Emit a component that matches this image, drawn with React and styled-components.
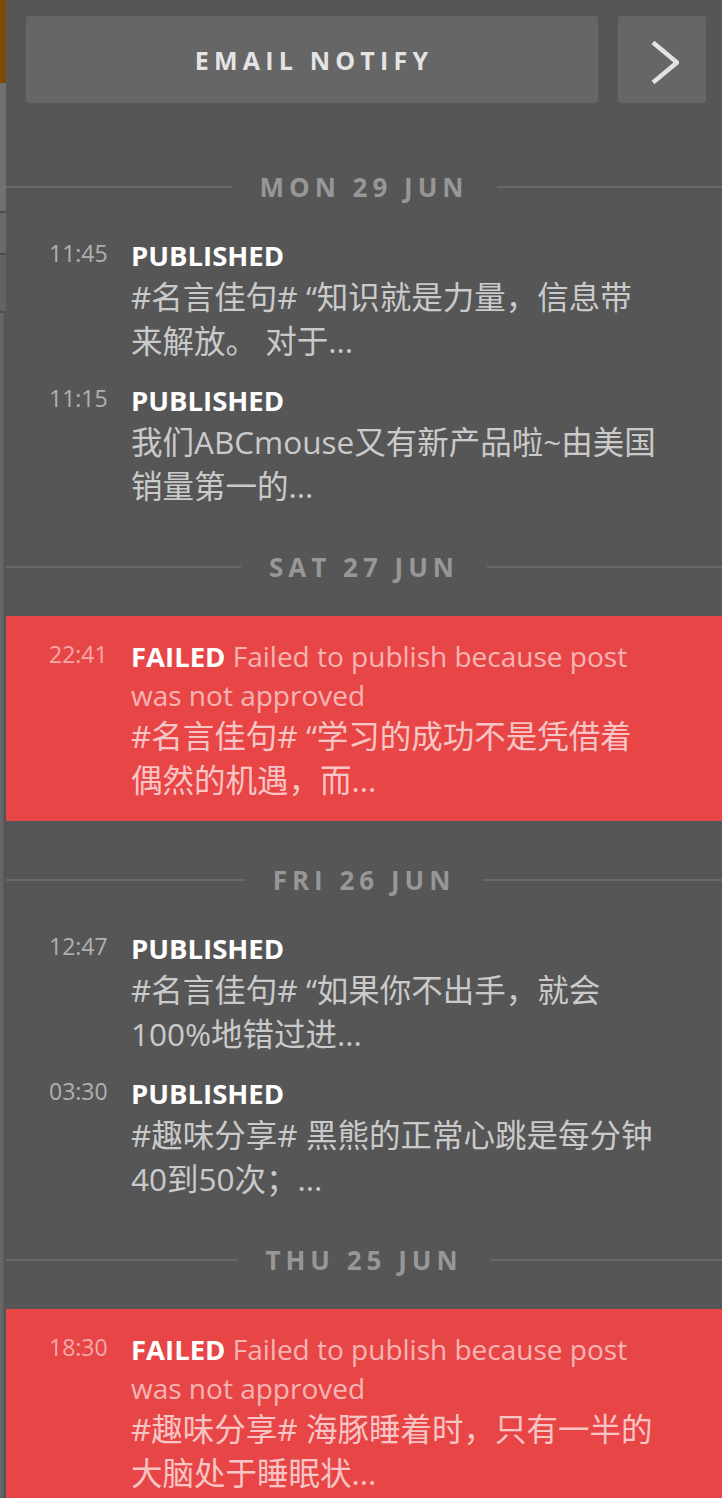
import React from "react";
import styled, { createGlobalStyle } from "styled-components";

const GlobalStyle = createGlobalStyle`
  html, body {
    margin: 0;
    padding: 0;
    background: #555555;
    overflow: hidden;
  }
  body {
    font-family: "Open Sans", "Noto Sans CJK SC", sans-serif;
  }
`;

const Page = styled.div`
  display: flex;
  flex-direction: row;
  width: 722px;
  height: 1498px;
  overflow: hidden;
  background: #555555;
`;

const LeftEdge = styled.div`
  display: flex;
  flex-direction: column;
  width: 6px;
  flex-shrink: 0;
  background: linear-gradient(to right, #6a6a6a, #5e5e5e);
  box-shadow: inset -2px 0 3px rgba(0, 0, 0, 0.15);
`;

const EdgeBlock = styled.div`
  height: ${(p) => p.h}px;
  background: ${(p) => p.color};
  border-bottom: ${(p) => (p.line ? "2px solid #4f4f4f" : "none")};
`;

const Panel = styled.div`
  flex: 1;
  display: flex;
  flex-direction: column;
  padding-top: 16px;
  background: #565656;
`;

const Toolbar = styled.div`
  display: flex;
  flex-direction: row;
  gap: 20px;
  padding: 0 16px 0 20px;
  margin-bottom: 48px;
`;

const NotifyButton = styled.button`
  flex: 1;
  height: 87px;
  border: none;
  border-radius: 3px;
  background: #666666;
  color: #e4e4e4;
  font-family: "Open Sans", sans-serif;
  font-size: 25px;
  font-weight: 700;
  letter-spacing: 5.2px;
  padding: 0 0 0 4px;
`;

const ArrowButton = styled.button`
  width: 88px;
  height: 87px;
  border: none;
  border-radius: 3px;
  background: #666666;
  display: flex;
  align-items: center;
  justify-content: center;
  padding: 0;
`;

const Day = styled.section`
  display: flex;
  flex-direction: column;
  padding: 21px 0 23px;
`;

const Divider = styled.div`
  display: flex;
  flex-direction: row;
  align-items: center;
  height: 30px;
  margin-bottom: 34px;

  &::before,
  &::after {
    content: "";
    flex: 1;
    height: 2px;
    background: #696969;
  }
`;

const DayLabel = styled.span`
  margin: 0 28px;
  color: #979797;
  font-size: 26px;
  font-weight: 700;
  letter-spacing: 5px;
  line-height: 30px;
`;

const EntryList = styled.div`
  display: flex;
  flex-direction: column;
  gap: 18px;
`;

const Entry = styled.div`
  display: flex;
  flex-direction: row;
  padding: ${(p) => (p.failed ? "21px 0 19px 43px" : "0 0 0 43px")};
  background: ${(p) => (p.failed ? "#e84646" : "transparent")};
`;

const Time = styled.div`
  width: 82px;
  flex-shrink: 0;
  padding-top: 3px;
  font-size: 23px;
  line-height: 28px;
  color: rgba(255, 255, 255, 0.55);
`;

const Content = styled.div`
  width: 528px;
`;

const Headline = styled.div`
  font-size: 28px;
  line-height: 38px;
  color: rgba(255, 255, 255, 0.62);
`;

const Status = styled.span`
  font-size: 27.5px;
  font-weight: 700;
  color: #ffffff;
`;

const Body = styled.div`
  font-size: 31.5px;
  line-height: 44px;
  color: rgba(255, 255, 255, 0.7);
`;

const Chevron = () => (
  <svg width="34" height="48" viewBox="0 0 34 48">
    <polyline
      points="8,6.5 32,26.5 8,46.5"
      fill="none"
      stroke="#e2e2e2"
      strokeWidth="4.5"
    />
  </svg>
);

const days = [
  {
    label: "MON 29 JUN",
    entries: [
      {
        time: "11:45",
        status: "PUBLISHED",
        text: "#名言佳句# “知识就是力量，信息带来解放。 对于...",
      },
      {
        time: "11:15",
        status: "PUBLISHED",
        text: "我们ABCmouse又有新产品啦~由美国销量第一的...",
      },
    ],
  },
  {
    label: "SAT 27 JUN",
    entries: [
      {
        time: "22:41",
        status: "FAILED",
        message: "Failed to publish because post was not approved",
        text: "#名言佳句# “学习的成功不是凭借着偶然的机遇，而...",
      },
    ],
  },
  {
    label: "FRI 26 JUN",
    entries: [
      {
        time: "12:47",
        status: "PUBLISHED",
        text: "#名言佳句# “如果你不出手，就会100%地错过进...",
      },
      {
        time: "03:30",
        status: "PUBLISHED",
        text: "#趣味分享# 黑熊的正常心跳是每分钟40到50次；...",
      },
    ],
  },
  {
    label: "THU 25 JUN",
    entries: [
      {
        time: "18:30",
        status: "FAILED",
        message: "Failed to publish because post was not approved",
        text: "#趣味分享# 海豚睡着时，只有一半的大脑处于睡眠状...",
      },
    ],
  },
];

function App() {
  return (
    <Page>
      <GlobalStyle />
      <LeftEdge>
        <EdgeBlock h={83} color="#7a4b03" />
        <EdgeBlock h={128} color="#707070" line />
        <EdgeBlock h={40} color="#6a6a6a" line />
        <EdgeBlock h={56} color="#626262" line />
      </LeftEdge>
      <Panel>
        <Toolbar>
          <NotifyButton>EMAIL NOTIFY</NotifyButton>
          <ArrowButton>
            <Chevron />
          </ArrowButton>
        </Toolbar>
        {days.map((day) => (
          <Day key={day.label}>
            <Divider>
              <DayLabel>{day.label}</DayLabel>
            </Divider>
            <EntryList>
              {day.entries.map((entry, index) => (
                <Entry key={index} failed={entry.status === "FAILED"}>
                  <Time>{entry.time}</Time>
                  <Content>
                    <Headline>
                      <Status>{entry.status}</Status>
                      {entry.message ? " " + entry.message : ""}
                    </Headline>
                    <Body>{entry.text}</Body>
                  </Content>
                </Entry>
              ))}
            </EntryList>
          </Day>
        ))}
      </Panel>
    </Page>
  );
}

export default App;
